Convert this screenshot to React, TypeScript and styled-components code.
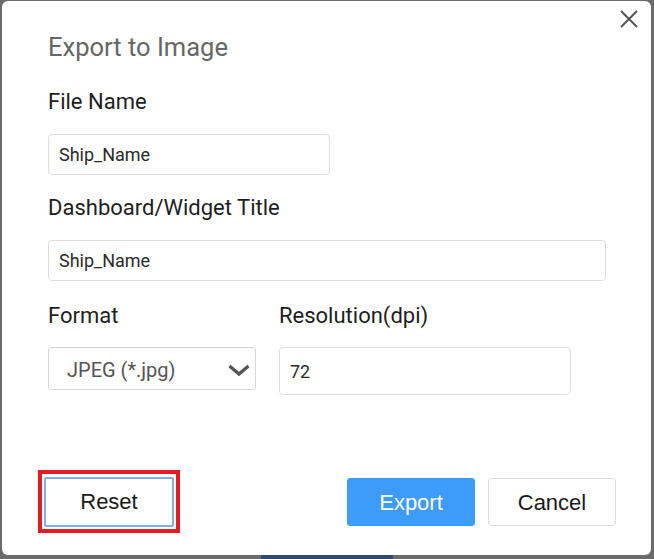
import React from "react";
import styled, { createGlobalStyle } from "styled-components";

const Global = createGlobalStyle`
  html, body { margin: 0; padding: 0; }
  body { background: #6b6b6b; font-family: Roboto, "Liberation Sans", sans-serif; }
  * { box-sizing: border-box; }
`;

const Backdrop = styled.div`
  width: 654px;
  height: 559px;
  background: #6b6b6b;
  display: flex;
  flex-direction: column;
  padding: 1px 3px 0 2px;
`;

const Dialog = styled.div`
  position: relative;
  height: 554px;
  background: #ffffff;
  border-radius: 6px;
  display: flex;
  flex-direction: column;
  padding: 31px 35px 22px 46px;
`;

const BottomStrip = styled.div`
  flex: 1;
  display: flex;
  padding-left: 259px;
`;

const StripSegment = styled.div`
  width: 132px;
  background: #2f4a6e;
`;

const CloseButton = styled.button`
  position: absolute;
  top: 9px;
  right: 13px;
  width: 18px;
  height: 18px;
  padding: 0;
  border: none;
  background: transparent;
  display: flex;
`;

const Title = styled.h2`
  margin: 0;
  font-family: Roboto, sans-serif;
  font-weight: 400;
  font-size: 25.5px;
  line-height: 30px;
  color: #666666;
`;

const Label = styled.label<{ $top: number }>`
  display: block;
  margin-top: ${(p) => p.$top}px;
  font-family: Roboto, sans-serif;
  font-size: 22px;
  line-height: 26px;
  color: #1e1e1e;
`;

const TextInput = styled.input<{ $width: number; $height: number; $top: number }>`
  display: block;
  width: ${(p) => p.$width}px;
  height: ${(p) => p.$height}px;
  margin: ${(p) => p.$top}px 0 0 0;
  padding: 0 10px;
  border: 1.5px solid #dedede;
  border-radius: 4px;
  font-family: Roboto, sans-serif;
  font-size: 18px;
  color: #2a2a2a;
  background: #fff;
  outline: none;
`;

const Grid = styled.div`
  display: grid;
  grid-template-columns: 208px 292px;
  column-gap: 23px;
  margin-top: 22px;
  align-items: start;
`;

const GridLabel = styled.div`
  font-family: Roboto, sans-serif;
  font-size: 22px;
  line-height: 26px;
  color: #1e1e1e;
  margin-bottom: 18px;
`;

const Select = styled.div`
  margin-top: 4px;
  width: 208px;
  height: 43px;
  border: 1.5px solid #d6d6d6;
  border-radius: 3px;
  display: flex;
  align-items: center;
  justify-content: space-between;
  padding: 2px 5px 0 18px;
  font-family: Roboto, sans-serif;
  font-size: 20px;
  color: #555555;
`;

const Footer = styled.div`
  margin-top: auto;
  margin-left: -10px;
  display: flex;
  align-items: center;
`;

const FocusMark = styled.div`
  border: 4px solid #e31b23;
  padding: 3px 2px 2px 2px;
  margin-right: auto;
`;

const Button = styled.button<{ $variant: "reset" | "primary" | "default" }>`
  height: ${(p) => (p.$variant === "reset" ? 50 : 48)}px;
  width: ${(p) => (p.$variant === "reset" ? 130 : 128)}px;
  font-family: "Liberation Sans", Arial, sans-serif;
  font-size: 22px;
  border-radius: ${(p) => (p.$variant === "reset" ? 2 : 3)}px;
  background: ${(p) => (p.$variant === "primary" ? "#3d9bf9" : "#ffffff")};
  color: ${(p) => (p.$variant === "primary" ? "#ffffff" : "#1a1a1a")};
  border: ${(p) =>
    p.$variant === "reset"
      ? "2px solid #84acee"
      : p.$variant === "primary"
      ? "1px solid #3d9bf9"
      : "1.5px solid #dcdcdc"};
  padding: 0;
  padding-top: ${(p) => (p.$variant === "reset" ? 0 : 2)}px;
  display: flex;
  align-items: center;
  justify-content: center;
  margin-left: ${(p) => (p.$variant === "default" ? 13 : 0)}px;
`;

export default function App() {
  return (
    <>
      <Global />
      <Backdrop>
        <Dialog>
          <CloseButton aria-label="Close">
            <svg width="18" height="18" viewBox="0 0 18 18">
              <path d="M1 1 L17 17 M17 1 L1 17" stroke="#555" strokeWidth="2" />
            </svg>
          </CloseButton>
          <Title>Export to Image</Title>
          <Label $top={27}>File Name</Label>
          <TextInput $width={282} $height={41} $top={19} defaultValue="Ship_Name" />
          <Label $top={20}>Dashboard/Widget Title</Label>
          <TextInput $width={558} $height={41} $top={19} defaultValue="Ship_Name" />
          <Grid>
            <div>
              <GridLabel>Format</GridLabel>
              <Select>
                <span>JPEG (*.jpg)</span>
                <svg width="22" height="12" viewBox="0 0 22 12">
                  <path d="M1.5 2 L11 10 L20.5 2" fill="none" stroke="#555" strokeWidth="3.4" />
                </svg>
              </Select>
            </div>
            <div>
              <GridLabel>Resolution(dpi)</GridLabel>
              <TextInput $width={292} $height={48} $top={0} defaultValue="72" />
            </div>
          </Grid>
          <Footer>
            <FocusMark>
              <Button $variant="reset">Reset</Button>
            </FocusMark>
            <Button $variant="primary">Export</Button>
            <Button $variant="default">Cancel</Button>
          </Footer>
        </Dialog>
        <BottomStrip>
          <StripSegment />
        </BottomStrip>
      </Backdrop>
    </>
  );
}
